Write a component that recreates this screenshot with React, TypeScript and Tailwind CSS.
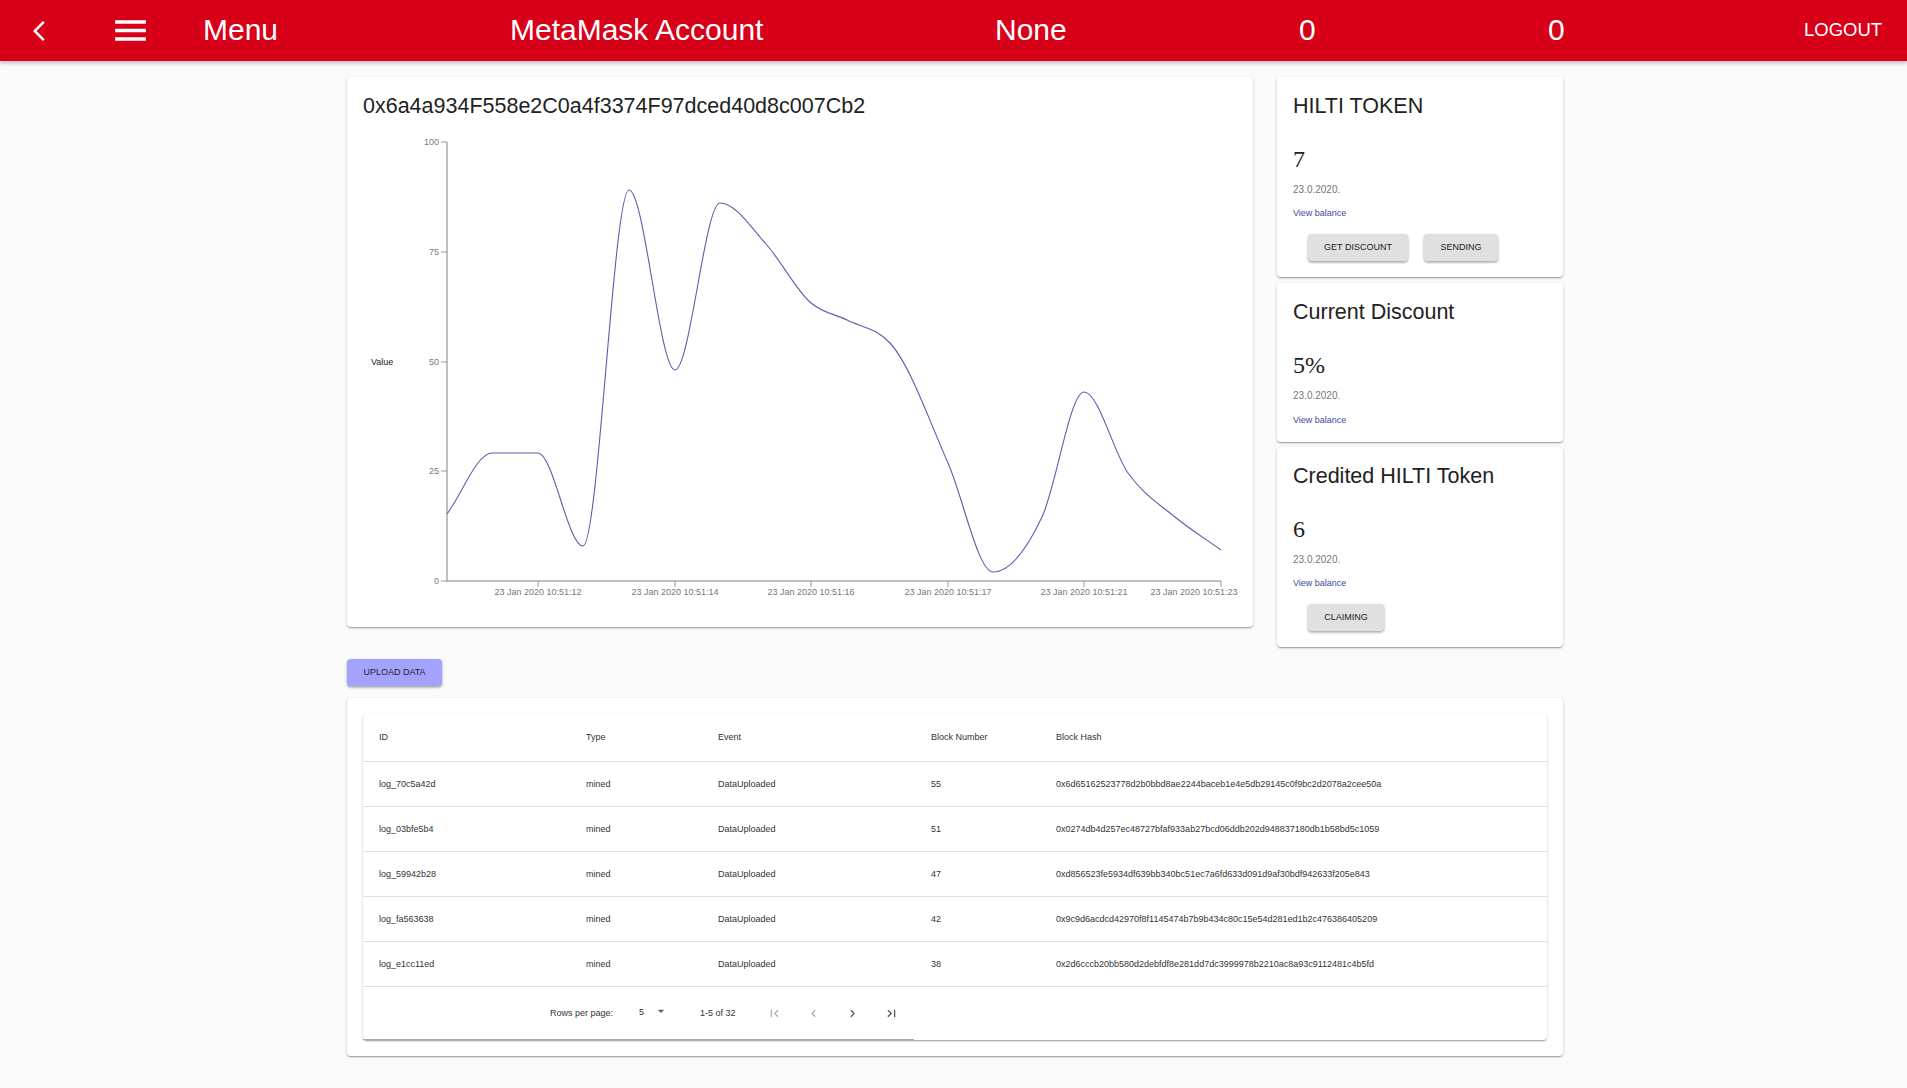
const curvePoints: [number, number][] = [
  [447, 514], [492, 453], [538, 453], [583, 546], [629, 190], [675, 370], [720, 203], [766, 244], [811, 303],
  [847, 320], [890, 343], [948, 463], [993, 572], [1042, 517], [1084, 392], [1128, 473], [1175, 517], [1221, 550],
];

// same idea as d3 curveMonotoneX
function monotonePath(pts: [number, number][]) {
  const n = pts.length;
  const dx: number[] = [];
  const m: number[] = [];
  for (let i = 0; i < n - 1; i++) {
    dx.push(pts[i + 1][0] - pts[i][0]);
    m.push((pts[i + 1][1] - pts[i][1]) / dx[i]);
  }
  const t: number[] = [m[0]];
  for (let i = 1; i < n - 1; i++) {
    if (m[i - 1] * m[i] <= 0) t.push(0);
    else {
      const p = (m[i - 1] * dx[i] + m[i] * dx[i - 1]) / (dx[i - 1] + dx[i]);
      t.push(Math.sign(m[i]) * Math.min(Math.abs(m[i - 1]), Math.abs(m[i]), Math.abs(p) / 2) * 2);
    }
  }
  t.push(m[n - 2]);
  let d = `M${pts[0][0]},${pts[0][1]}`;
  for (let i = 0; i < n - 1; i++) {
    const h = dx[i] / 3;
    d += `C${pts[i][0] + h},${pts[i][1] + t[i] * h},${pts[i + 1][0] - h},${pts[i + 1][1] - t[i + 1] * h},${pts[i + 1][0]},${pts[i + 1][1]}`;
  }
  return d;
}

const yTicks: [string, number][] = [["100", 142], ["75", 252], ["50", 362], ["25", 471], ["0", 581]];
const xTicks: [string, number][] = [
  ["23 Jan 2020 10:51:12", 538],
  ["23 Jan 2020 10:51:14", 675],
  ["23 Jan 2020 10:51:16", 811],
  ["23 Jan 2020 10:51:17", 948],
  ["23 Jan 2020 10:51:21", 1084],
];

function Chart() {
  return (
    <svg width="906" height="507" viewBox="347 120 906 507" className="block">
      <g fontFamily="'Liberation Sans', Arial, sans-serif" fontSize="9">
        <text x="371" y="365" fill="#222">Value</text>
        <path d="M447 142V581H1221" fill="none" stroke="#aaa" strokeWidth="1.5" />
        {yTicks.map(([label, y]) => (
          <g key={label}>
            <line x1="441" x2="447" y1={y} y2={y} stroke="#999" />
            <text x="439" y={y + 3} textAnchor="end" fill="#777">{label}</text>
          </g>
        ))}
        {xTicks.map(([label, x]) => (
          <g key={label}>
            <line x1={x} x2={x} y1="581" y2="587" stroke="#999" />
            <text x={x} y="595" textAnchor="middle" fill="#777">{label}</text>
          </g>
        ))}
        <line x1="1221" x2="1221" y1="581" y2="587" stroke="#999" />
        <text x="1194" y="595" textAnchor="middle" fill="#777">23 Jan 2020 10:51:23</text>
        <path d={monotonePath(curvePoints)} fill="none" stroke="#5a5eaa" strokeWidth="1.1" />
      </g>
    </svg>
  );
}

const PAPER = "rounded bg-white shadow-[0_1px_3px_rgba(0,0,0,0.2),0_1px_1px_rgba(0,0,0,0.14),0_2px_1px_-1px_rgba(0,0,0,0.12)]";
const BTN = "rounded h-[27px] bg-[#e0e0e0] text-[9px] text-[#222] shadow-[0_1px_3px_rgba(0,0,0,0.25),0_2px_2px_rgba(0,0,0,0.14)]";

function TokenCard({
  title,
  amount,
  viewGap,
  children,
}: {
  title: string;
  amount: string;
  viewGap: string;
  children?: React.ReactNode;
}) {
  return (
    <div className={`${PAPER} px-4 pt-4 pb-4`}>
      <div className="text-[21.5px] leading-[26px] text-[#222]">{title}</div>
      <div className="mt-[27px] [font-family:'Liberation_Serif',serif] text-[24px] leading-[26px] text-[#222]">{amount}</div>
      <div className="mt-[12px] text-[10px] leading-3 text-[#777]">23.0.2020.</div>
      <div className={`${viewGap} text-[9px] leading-3 text-[#3f4a9e]`}>View balance</div>
      {children}
    </div>
  );
}

const rows = [
  ["log_70c5a42d", "mined", "DataUploaded", "55", "0x6d65162523778d2b0bbd8ae2244baceb1e4e5db29145c0f9bc2d2078a2cee50a"],
  ["log_03bfe5b4", "mined", "DataUploaded", "51", "0x0274db4d257ec48727bfaf933ab27bcd06ddb202d948837180db1b58bd5c1059"],
  ["log_59942b28", "mined", "DataUploaded", "47", "0xd856523fe5934df639bb340bc51ec7a6fd633d091d9af30bdf942633f205e843"],
  ["log_fa563638", "mined", "DataUploaded", "42", "0x9c9d6acdcd42970f8f1145474b7b9b434c80c15e54d281ed1b2c476386405209"],
  ["log_e1cc11ed", "mined", "DataUploaded", "38", "0x2d6cccb20bb580d2debfdf8e281dd7dc3999978b2210ac8a93c9112481c4b5fd"],
];

const COLS = "grid grid-cols-[207px_132px_213px_125px_1fr] items-center border-b border-[#e0e0e0] pl-4 text-[9px] text-[#333]";

function Icon({ d, className }: { d: string; className: string }) {
  return (
    <svg viewBox="0 0 24 24" className={className} fill="currentColor">
      <path d={d} />
    </svg>
  );
}

function Pager() {
  return (
    <div className="flex h-[53px] items-center text-[9px] text-[#333]">
      <span className="ml-[187px]">Rows per page:</span>
      <span className="mb-[2px] ml-[26px]">5</span>
      <Icon d="M7 10l5 5 5-5z" className="mb-[5px] ml-[9px] h-[16px] w-[16px] text-[#666]" />
      <span className="ml-[31px]">1-5 of 32</span>
      <div className="ml-[31px] flex gap-[24px]">
        <Icon d="M18.41 16.59L13.82 12l4.59-4.59L17 6l-6 6 6 6zM6 6h2v12H6z" className="h-[15px] w-[15px] text-[#aaa]" />
        <Icon d="M15.41 7.41L14 6l-6 6 6 6 1.41-1.41L10.83 12z" className="h-[15px] w-[15px] text-[#aaa]" />
        <Icon d="M10 6L8.59 7.41 13.17 12l-4.58 4.59L10 18l6-6z" className="h-[15px] w-[15px] text-[#555]" />
        <Icon d="M5.59 7.41L10.18 12l-4.59 4.59L7 18l6-6-6-6zM16 6h2v12h-2z" className="h-[15px] w-[15px] text-[#555]" />
      </div>
    </div>
  );
}

export default function App() {
  return (
    <div className="[font-family:'Liberation_Sans',Arial,sans-serif] min-h-[1088px] bg-[#fafafa]">
      <header className="flex h-[61px] items-center bg-[#d80019] text-white shadow-[0_2px_4px_rgba(0,0,0,0.25)]">
        <Icon d="M11.67 3.87L9.9 2.1 0 12l9.9 9.9 1.77-1.77L3.54 12z" className="ml-[33px] h-[24px] w-[24px]" />
        <Icon d="M3 18h18v-2H3v2zm0-5h18v-2H3v2zm0-7v2h18V6H3z" className="ml-[53px] h-[41px] w-[41px]" />
        <span className="ml-[52px] w-[307px] pb-[2px] text-[30px]">Menu</span>
        <span className="w-[485px] pb-[2px] text-[30px]">MetaMask Account</span>
        <span className="w-[304px] pb-[2px] text-[30px]">None</span>
        <span className="w-[249px] pb-[2px] text-[30px]">0</span>
        <span className="w-[256px] pb-[2px] text-[30px]">0</span>
        <span className="pb-[2px] text-[18.5px]">LOGOUT</span>
      </header>

      <main className="ml-[347px] w-[1216px] pt-4">
        <div className="flex items-start gap-6">
          <div className="w-[906px]">
            <div className={PAPER}>
              <div className="h-[43px] px-4 pt-4 text-[21.5px] leading-[26px] text-[#222]">
                0x6a4a934F558e2C0a4f3374F97dced40d8c007Cb2
              </div>
              <Chart />
            </div>
            <button className="mt-[32px] h-[27px] w-[95px] rounded bg-[#a3a3fd] text-[9px] text-[#223] shadow-[0_1px_3px_rgba(0,0,0,0.25),0_2px_2px_rgba(0,0,0,0.14)]">
              UPLOAD DATA
            </button>
          </div>
          <div className="w-[286px]">
            <TokenCard title="HILTI TOKEN" amount="7" viewGap="mt-[11px]">
              <div className="mt-[15px] ml-[15px] flex gap-[16px]">
                <button className={`${BTN} w-[100px]`}>GET DISCOUNT</button>
                <button className={`${BTN} w-[74px]`}>SENDING</button>
              </div>
            </TokenCard>
            <div className="mt-[6px]">
              <TokenCard title="Current Discount" amount="5%" viewGap="mt-[12px]" />
            </div>
            <div className="mt-[5px]">
              <TokenCard title="Credited HILTI Token" amount="6" viewGap="mt-[11px]">
                <div className="mt-[15px] ml-[15px] flex">
                  <button className={`${BTN} w-[76px]`}>CLAIMING</button>
                </div>
              </TokenCard>
            </div>
          </div>
        </div>

        <section className={`${PAPER} mt-[12px] px-4 py-4`}>
          <div className={`${PAPER} relative`}>
            <div className={`${COLS} h-[48px]`}>
              <span>ID</span>
              <span>Type</span>
              <span>Event</span>
              <span>Block Number</span>
              <span>Block Hash</span>
            </div>
            {rows.map((row) => (
              <div key={row[0]} className={`${COLS} h-[45px]`}>
                {row.map((cell, i) => (
                  <span key={i} className="pt-px">{cell}</span>
                ))}
              </div>
            ))}
            <Pager />
            <div className="absolute bottom-0 left-0 h-px w-[551px] bg-[#aaa]" />
          </div>
        </section>
      </main>
    </div>
  );
}
